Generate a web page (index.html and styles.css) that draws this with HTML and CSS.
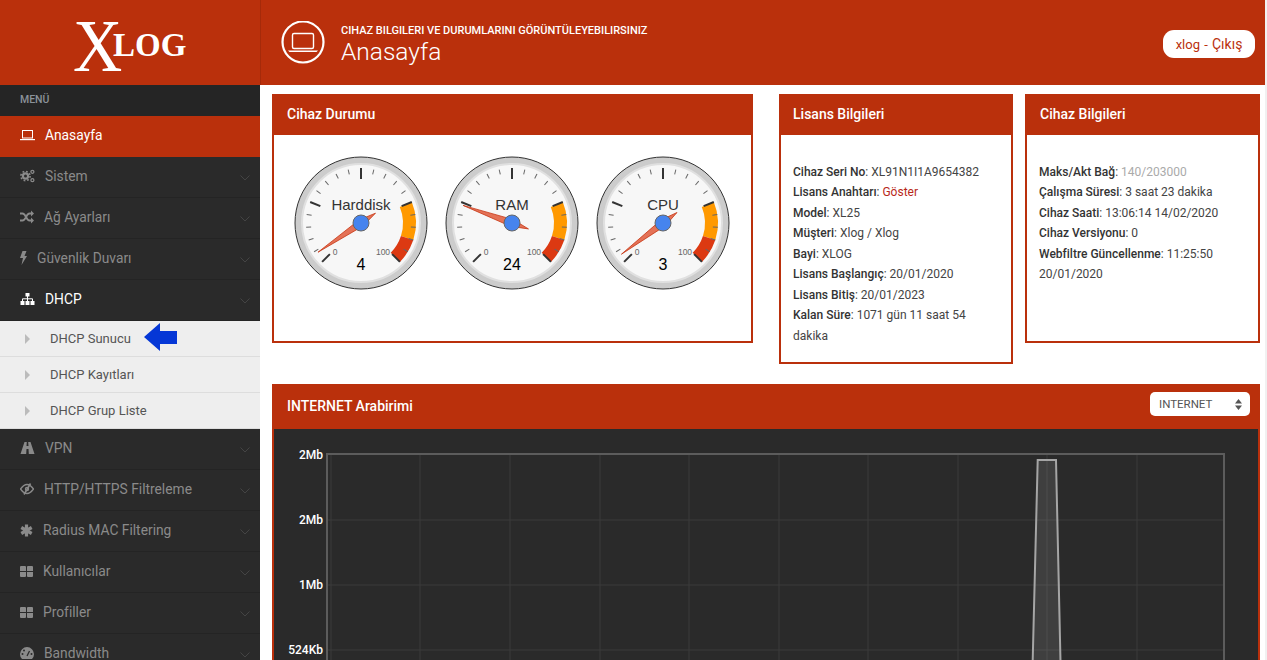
FILE: index.html
```html
<!DOCTYPE html>
<html lang="tr">
<head>
    <meta charset="UTF-8">
    <meta name="viewport" content="width=device-width, initial-scale=1.0">
    <title>XLOG - Anasayfa</title>
    <link rel="stylesheet" href="styles.css">
</head>
<body>
<div class="page">
    <header class="topbar">
        <div class="brand">
            <span class="brand-x">X</span><span class="brand-log">LOG</span>
        </div>
        <div class="page-head">
            <svg class="head-icon" width="44" height="44" viewBox="0 0 44 44">
                <circle cx="22" cy="21" r="20.5" fill="none" stroke="#fff" stroke-width="2.2"/>
                <rect x="11.5" y="12.5" width="21" height="15" rx="1.5" fill="none" stroke="#fff" stroke-width="1.4"/>
                <path d="M7 29.5h30l-1.5 1.5h-27z" fill="#fff"/>
            </svg>
            <div class="head-text">
                <div class="head-sub">CIHAZ BILGILERI VE DURUMLARINI GÖRÜNTÜLEYEBILIRSINIZ</div>
                <h1 class="head-title">Anasayfa</h1>
            </div>
            <a class="user-pill"><span class="user-name">xlog - </span>Çıkış</a>
        </div>
    </header>

    <div class="layout">
        <nav class="sidebar">
            <div class="menu-label">MENÜ</div>
            <ul class="menu">
                <li class="menu-item active">
                    <svg width="15" height="12" viewBox="0 0 15 12"><rect x="2.5" y="1.5" width="10" height="7.5" fill="none" stroke="currentColor"/><rect y="10" width="15" height="1.2" fill="currentColor"/></svg>
                    <span>Anasayfa</span>
                </li>
                <li class="menu-item">
                    <svg width="15" height="14" viewBox="0 0 15 14" fill="none" stroke="currentColor"><circle cx="5.5" cy="7" r="2.6" stroke-width="2.2"/><circle cx="5.5" cy="7" r="4.6" stroke-width="1.6" stroke-dasharray="1.8 1.8"/><circle cx="12.4" cy="2.8" r="1.5" stroke-width="1.3"/><circle cx="12.4" cy="11.2" r="1.5" stroke-width="1.3"/></svg>
                    <span>Sistem</span>
                    <svg class="chevron" width="10" height="6" viewBox="0 0 10 6"><path d="M.5.5 5 5 9.5.5" fill="none" stroke="currentColor"/></svg>
                </li>
                <li class="menu-item">
                    <svg width="14" height="14" viewBox="0 0 14 14"><path d="M0 3.5h2.5c3.5 0 3.5 7 7 7H11M0 10.5h2.5c3.5 0 3.5-7 7-7H11" fill="none" stroke="currentColor" stroke-width="1.8"/><path d="M11 .5 14 3.5 11 6.5zM11 7.5l3 3-3 3z" fill="currentColor"/></svg>
                    <span>Ağ Ayarları</span>
                    <svg class="chevron" width="10" height="6" viewBox="0 0 10 6"><path d="M.5.5 5 5 9.5.5" fill="none" stroke="currentColor"/></svg>
                </li>
                <li class="menu-item">
                    <svg width="7" height="14" viewBox="0 0 7 14"><path d="M2.5 0H6.5L4.500 5H7L1.5 14 3 7H0z" fill="currentColor"/></svg>
                    <span>Güvenlik Duvarı</span>
                    <svg class="chevron" width="10" height="6" viewBox="0 0 10 6"><path d="M.5.5 5 5 9.5.5" fill="none" stroke="currentColor"/></svg>
                </li>
                <li class="menu-item open">
                    <svg width="15" height="12" viewBox="0 0 14 12"><path d="M5 0h4v3.5H5zM0 8h4v4H0zM5 8h4v4H5zM10 8h4v4h-4z" fill="currentColor"/><path d="M7 3v5M2 8V5.8h10V8" fill="none" stroke="currentColor"/></svg>
                    <span>DHCP</span>
                    <svg class="chevron" width="10" height="6" viewBox="0 0 10 6"><path d="M.5.5 5 5 9.5.5" fill="none" stroke="currentColor"/></svg>
                </li>
                <li>
                    <ul class="submenu">
                        <li class="sub-item">
                            DHCP Sunucu
                            <svg class="note-arrow" width="34" height="28" viewBox="0 0 34 28"><path d="M0 14 16 0V8H33V21H16V28z" fill="#0537d6"/></svg>
                        </li>
                        <li class="sub-item">DHCP Kayıtları</li>
                        <li class="sub-item">DHCP Grup Liste</li>
                    </ul>
                </li>
                <li class="menu-item">
                    <svg width="15" height="12" viewBox="0 0 14 12"><path d="M0 12 4 0H6.3L6 4H8L7.7 0H10L14 12H8.3L8 7H6L5.7 12z" fill="currentColor"/></svg>
                    <span>VPN</span>
                    <svg class="chevron" width="10" height="6" viewBox="0 0 10 6"><path d="M.5.5 5 5 9.5.5" fill="none" stroke="currentColor"/></svg>
                </li>
                <li class="menu-item">
                    <svg width="14" height="12" viewBox="0 0 14 12" fill="none" stroke="currentColor"><path d="M.5 6C3 2.5 5 1.5 7 1.5S11 2.5 13.5 6C11 9.5 9 10.5 7 10.5S3 9.5.5 6z" stroke-width="1.3"/><path d="M10.5.5 4 11.5" stroke-width="1.6"/><circle cx="7" cy="6" r="1.5" stroke-width="1.4"/></svg>
                    <span>HTTP/HTTPS Filtreleme</span>
                    <svg class="chevron" width="10" height="6" viewBox="0 0 10 6"><path d="M.5.5 5 5 9.5.5" fill="none" stroke="currentColor"/></svg>
                </li>
                <li class="menu-item">
                    <svg width="13" height="13" viewBox="0 0 13 13"><path d="M6.5.5v12M1.3 3.5l10.4 6M1.3 9.5l10.4-6" fill="none" stroke="currentColor" stroke-width="3.2"/></svg>
                    <span>Radius MAC Filtering</span>
                    <svg class="chevron" width="10" height="6" viewBox="0 0 10 6"><path d="M.5.5 5 5 9.5.5" fill="none" stroke="currentColor"/></svg>
                </li>
                <li class="menu-item">
                    <svg width="13" height="11" viewBox="0 0 13 11"><path d="M0 1a1 1 0 0 1 1-1h4a1 1 0 0 1 1 1v4H0zM7 1a1 1 0 0 1 1-1h4a1 1 0 0 1 1 1v4H7zM0 6h6v4a1 1 0 0 1-1 1H1a1 1 0 0 1-1-1zM7 6h6v4a1 1 0 0 1-1 1H8a1 1 0 0 1-1-1z" fill="currentColor"/></svg>
                    <span>Kullanıcılar</span>
                    <svg class="chevron" width="10" height="6" viewBox="0 0 10 6"><path d="M.5.5 5 5 9.5.5" fill="none" stroke="currentColor"/></svg>
                </li>
                <li class="menu-item">
                    <svg width="13" height="11" viewBox="0 0 13 11"><path d="M0 1a1 1 0 0 1 1-1h4a1 1 0 0 1 1 1v4H0zM7 1a1 1 0 0 1 1-1h4a1 1 0 0 1 1 1v4H7zM0 6h6v4a1 1 0 0 1-1 1H1a1 1 0 0 1-1-1zM7 6h6v4a1 1 0 0 1-1 1H8a1 1 0 0 1-1-1z" fill="currentColor"/></svg>
                    <span>Profiller</span>
                    <svg class="chevron" width="10" height="6" viewBox="0 0 10 6"><path d="M.5.5 5 5 9.5.5" fill="none" stroke="currentColor"/></svg>
                </li>
                <li class="menu-item">
                    <svg width="14" height="12" viewBox="0 0 14 12"><path d="M2 12A7 7 0 1 1 12 12z" fill="currentColor"/><path d="M7 9 9.5 4" stroke="#2a2a2a" stroke-width="1.3"/><circle cx="2.5" cy="7" r="1" fill="#2a2a2a"/><circle cx="4" cy="3.5" r="1" fill="#2a2a2a"/><circle cx="11.5" cy="7" r="1" fill="#2a2a2a"/></svg>
                    <span>Bandwidth</span>
                    <svg class="chevron" width="10" height="6" viewBox="0 0 10 6"><path d="M.5.5 5 5 9.5.5" fill="none" stroke="currentColor"/></svg>
                </li>
            </ul>
        </nav>

        <main class="content">
            <div class="panel-row">
                <section class="panel panel-status">
                    <h2 class="panel-title">Cihaz Durumu</h2>
                    <div class="gauges">
                        <svg class="gauge" width="136" height="136" viewBox="-68 -68 136 136">
                            <defs>
                                <g id="gauge-face">
                                    <circle class="g-outer" r="66"/>
                                    <circle class="g-inner" r="59"/>
                                    <path class="g-orange" d="M38.8-16.07 50.8-21.05A55 55 0 0 1 52.3 17L39.94 12.98A42 42 0 0 0 38.8-16.07z"/>
                                    <path class="g-red" d="M39.94 12.98 52.3 17A55 55 0 0 1 38.9 38.9L29.7 29.7A42 42 0 0 0 39.94 12.98z"/>
                                    <g class="g-minor">
                                        <line y1="-55" y2="-50" transform="rotate(-121.5)"/>
                                        <line y1="-55" y2="-50" transform="rotate(-108)"/>
                                        <line y1="-55" y2="-50" transform="rotate(-94.5)"/>
                                        <line y1="-55" y2="-50" transform="rotate(-81)"/>
                                        <line y1="-55" y2="-50" transform="rotate(-54)"/>
                                        <line y1="-55" y2="-50" transform="rotate(-40.5)"/>
                                        <line y1="-55" y2="-50" transform="rotate(-27)"/>
                                        <line y1="-55" y2="-50" transform="rotate(-13.5)"/>
                                        <line y1="-55" y2="-50" transform="rotate(13.5)"/>
                                        <line y1="-55" y2="-50" transform="rotate(27)"/>
                                        <line y1="-55" y2="-50" transform="rotate(40.5)"/>
                                        <line y1="-55" y2="-50" transform="rotate(54)"/>
                                        <line y1="-55" y2="-50" transform="rotate(81)"/>
                                        <line y1="-55" y2="-50" transform="rotate(94.5)"/>
                                        <line y1="-55" y2="-50" transform="rotate(108)"/>
                                        <line y1="-55" y2="-50" transform="rotate(121.5)"/>
                                    </g>
                                    <g class="g-major">
                                        <line y1="-55" y2="-44" transform="rotate(-135)"/>
                                        <line y1="-55" y2="-44" transform="rotate(-67.5)"/>
                                        <line y1="-55" y2="-44"/>
                                        <line y1="-55" y2="-44" transform="rotate(67.5)"/>
                                        <line y1="-55" y2="-44" transform="rotate(135)"/>
                                    </g>
                                    <text class="g-range" x="-26" y="32">0</text>
                                    <text class="g-range" x="22" y="32">100</text>
                                </g>
                                <path id="gauge-needle" class="g-needle" d="M0-52 3.6 0 0 17.5-3.6 0z"/>
                            </defs>
                            <use href="#gauge-face"/>
                            <text class="g-label" y="-13">Harddisk</text>
                            <text class="g-value" y="47">4</text>
                            <use href="#gauge-needle" transform="rotate(-124.2)"/>
                            <circle class="g-hub" r="8"/>
                        </svg>
                        <svg class="gauge" width="136" height="136" viewBox="-68 -68 136 136">
                            <use href="#gauge-face"/>
                            <text class="g-label" y="-13">RAM</text>
                            <text class="g-value" y="47">24</text>
                            <use href="#gauge-needle" transform="rotate(-70.2)"/>
                            <circle class="g-hub" r="8"/>
                        </svg>
                        <svg class="gauge" width="136" height="136" viewBox="-68 -68 136 136">
                            <use href="#gauge-face"/>
                            <text class="g-label" y="-13">CPU</text>
                            <text class="g-value" y="47">3</text>
                            <use href="#gauge-needle" transform="rotate(-126.9)"/>
                            <circle class="g-hub" r="8"/>
                        </svg>
                    </div>
                </section>

                <section class="panel panel-license">
                    <h2 class="panel-title">Lisans Bilgileri</h2>
                    <div class="info">
                        <div><b>Cihaz Seri No</b>: XL91N1I1A9654382</div>
                        <div><b>Lisans Anahtarı</b>: <a class="show-key">Göster</a></div>
                        <div><b>Model</b>: XL25</div>
                        <div><b>Müşteri</b>: Xlog / Xlog</div>
                        <div><b>Bayi</b>: XLOG</div>
                        <div><b>Lisans Başlangıç</b>: 20/01/2020</div>
                        <div><b>Lisans Bitiş</b>: 20/01/2023</div>
                        <div><b>Kalan Süre</b>: 1071 gün 11 saat 54 dakika</div>
                    </div>
                </section>

                <section class="panel panel-device">
                    <h2 class="panel-title">Cihaz Bilgileri</h2>
                    <div class="info">
                        <div><b>Maks/Akt Bağ</b>: <span class="muted">140/203000</span></div>
                        <div><b>Çalışma Süresi</b>: 3 saat 23 dakika</div>
                        <div><b>Cihaz Saati</b>: 13:06:14 14/02/2020</div>
                        <div><b>Cihaz Versiyonu</b>: 0</div>
                        <div><b>Webfiltre Güncellenme</b>: 11:25:50 20/01/2020</div>
                    </div>
                </section>
            </div>

            <section class="panel panel-chart">
                <div class="chart-head">
                    <h2 class="panel-title">INTERNET Arabirimi</h2>
                    <div class="iface-select">
                        <span>INTERNET</span>
                        <svg width="7" height="11" viewBox="0 0 7 11"><path d="M3.5 0 7 4.5H0zM3.5 11 0 6.5H7z" fill="#555"/></svg>
                    </div>
                </div>
                <div class="chart-body">
                    <svg class="chart" width="984" height="300">
                        <g class="grid">
                            <path d="M57 25V300M146 25V300M236 25V300M326 25V300M415 25V300M505 25V300M594 25V300M684 25V300M773 25V300M863 25V300"/>
                            <path d="M53 91H950M53 156H950M53 221H950"/>
                        </g>
                        <path class="plot-frame" d="M53 300V25H950V300"/>
                        <path class="series" d="M757 300 763.7 31H782L788 300"/>
                        <text class="axis" x="49" y="30">2Mb</text>
                        <text class="axis" x="49" y="95">2Mb</text>
                        <text class="axis" x="49" y="160">1Mb</text>
                        <text class="axis" x="49" y="225">524Kb</text>
                    </svg>
                </div>
            </section>
        </main>
    </div>
</div>
</body>
</html>
```

FILE: styles.css
```css
* {
    box-sizing: border-box;
}
html, body {
    height: 660px;
    overflow: hidden;
}
body {
    margin: 0;
    font-family: Roboto, "Liberation Sans", sans-serif;
    background-color: #f1f1f1;
    color: #333;
}
.page {
    width: 1265px;
    height: 660px;
    background-color: #fff;
    overflow: hidden;
}

/* top bar */
.topbar {
    display: flex;
    height: 85px;
    background-color: #ba300c;
    color: #fff;
}
.brand {
    display: flex;
    width: 261px;
    padding-left: 73px;
    border-right: 1px solid #a52a0a;
    font-family: "Liberation Serif", serif;
}
.brand-x {
    width: 40px;
    margin-top: 4px;
    font-size: 75px;
    line-height: 84px;
    transform: scaleX(.91);
    transform-origin: left center;
}
.brand-log {
    margin-top: 27px;
    font-size: 33px;
    font-weight: bold;
    line-height: 36px;
}
.page-head {
    display: flex;
    flex: 1;
    align-items: center;
    padding: 0 10px 0 20px;
}
.head-icon {
    flex: none;
}
.head-text {
    flex: 1;
    margin: 2px 0 0 16px;
}
.head-sub {
    font-size: 11px;
    font-weight: 500;
    line-height: 16px;
}
.head-title {
    margin: 0;
    font-size: 24.5px;
    font-weight: 300;
    line-height: 26px;
}
.user-pill {
    width: 92px;
    height: 28px;
    margin-top: 3px;
    border-radius: 11px;
    background-color: #fff;
    color: #ba300c;
    font-size: 14px;
    line-height: 28px;
    text-align: center;
}
.user-name {
    font-size: 13px;
    word-spacing: 1px;
}

/* sidebar */
.layout {
    display: flex;
    height: 575px;
}
.sidebar {
    flex: none;
    width: 260px;
    background-color: #2a2a2a;
    overflow: hidden;
}
.menu-label {
    height: 31px;
    padding-left: 20px;
    background-color: #252525;
    color: #8b9299;
    font-size: 10.5px;
    font-weight: 500;
    line-height: 29px;
}
.menu, .submenu {
    margin: 0;
    padding: 0;
    list-style: none;
}
.menu-item {
    display: flex;
    align-items: center;
    gap: 10px;
    height: 41px;
    padding: 0 10px 2px 20px;
    border-bottom: 1px solid #242424;
    color: #8a8a8a;
    font-size: 13.8px;
}
.menu-item.active {
    background-color: #ba300c;
    border-bottom-color: #ba300c;
    color: #fff;
}
.menu-item.open {
    color: #fff;
}
.menu-item svg {
    flex: none;
}
.chevron {
    margin: 3px 0 0 auto;
    color: #444;
}
.sub-item {
    position: relative;
    height: 36px;
    padding-left: 50px;
    background-color: #eee;
    border-bottom: 1px solid #ddd;
    color: #555;
    font-size: 13px;
    line-height: 35px;
}
.sub-item::before {
    content: "";
    position: absolute;
    left: 25px;
    top: 13px;
    border-left: 5px solid #bbb;
    border-top: 5px solid transparent;
    border-bottom: 5px solid transparent;
}
.note-arrow {
    position: absolute;
    left: 144px;
    top: 2px;
}

/* panels */
.content {
    flex: 1;
    padding: 9px 5px 0 12px;
}
.panel-row {
    display: flex;
    align-items: flex-start;
    margin-bottom: 20px;
}
.panel {
    border: 2px solid #ba300c;
    border-top: 0;
    background-color: #fff;
}
.panel-title {
    height: 41px;
    margin: 0 -2px;
    padding-left: 15px;
    background-color: #ba300c;
    color: #fff;
    font-size: 14px;
    font-weight: 500;
    line-height: 40px;
}
.panel-status {
    width: 481px;
    height: 249px;
    margin-right: 26px;
}
.panel-license {
    width: 234px;
    height: 270px;
    margin-right: 12px;
}
.panel-license .panel-title {
    padding-left: 14px;
}
.panel-device {
    width: 235px;
    height: 249px;
}
.gauges {
    display: flex;
    gap: 15px;
    padding: 20px 0 0 19px;
}
.info {
    padding: 26.5px 12px 0;
    font-size: 12px;
    line-height: 20.5px;
    color: #444;
}
.info b {
    font-weight: 500;
    color: #333;
}
.show-key {
    color: #b8281a;
}
.muted {
    color: #aaa;
}

/* gauge parts */
.gauge text {
    font-family: "Liberation Sans", Arial, sans-serif;
    text-anchor: middle;
}
.g-outer {
    fill: #ccc;
    stroke: #333;
    stroke-width: 1;
}
.g-inner {
    fill: #f7f7f7;
    stroke: #e0e0e0;
    stroke-width: 2;
}
.g-orange {
    fill: #f90;
}
.g-red {
    fill: #dc3912;
}
.g-minor line {
    stroke: #666;
    stroke-width: 1;
}
.g-major line {
    stroke: #333;
    stroke-width: 2;
}
.g-range {
    font-size: 8.5px;
    fill: #666;
}
.g-label {
    font-size: 15px;
    fill: #333;
}
.g-value {
    font-size: 16px;
    fill: #000;
}
.g-needle {
    fill: #dc3912;
    fill-opacity: .7;
    stroke: #c63310;
    stroke-width: .7;
}
.g-hub {
    fill: #4684ee;
    stroke: #666;
    stroke-width: 1;
}

/* interface chart */
.panel-chart {
    height: 340px;
}
.chart-head {
    display: flex;
    align-items: flex-start;
    justify-content: space-between;
    height: 45px;
    margin: 0 -2px;
    padding: 8px 10px 0 0;
    background-color: #ba300c;
}
.chart-head .panel-title {
    height: auto;
    margin: -8px 0 0;
    background: none;
    line-height: 44px;
}
.iface-select {
    display: flex;
    align-items: center;
    justify-content: space-between;
    width: 100px;
    height: 24px;
    padding: 0 8px 0 9px;
    border-radius: 5px;
    background-color: #fff;
    color: #555;
    font-size: 11.5px;
}
.chart-body {
    height: 295px;
    background-color: #2a2a2a;
}
.chart {
    display: block;
}
.grid path {
    fill: none;
    stroke: #3a3a3a;
    stroke-width: 1;
}
.plot-frame {
    fill: none;
    stroke: #5c5c5c;
    stroke-width: 2;
}
.series {
    fill: rgba(255, 255, 255, .1);
    stroke: #a5a5a5;
    stroke-width: 2;
}
.axis {
    fill: #fff;
    font-size: 12px;
    font-weight: 500;
    text-anchor: end;
}
```
